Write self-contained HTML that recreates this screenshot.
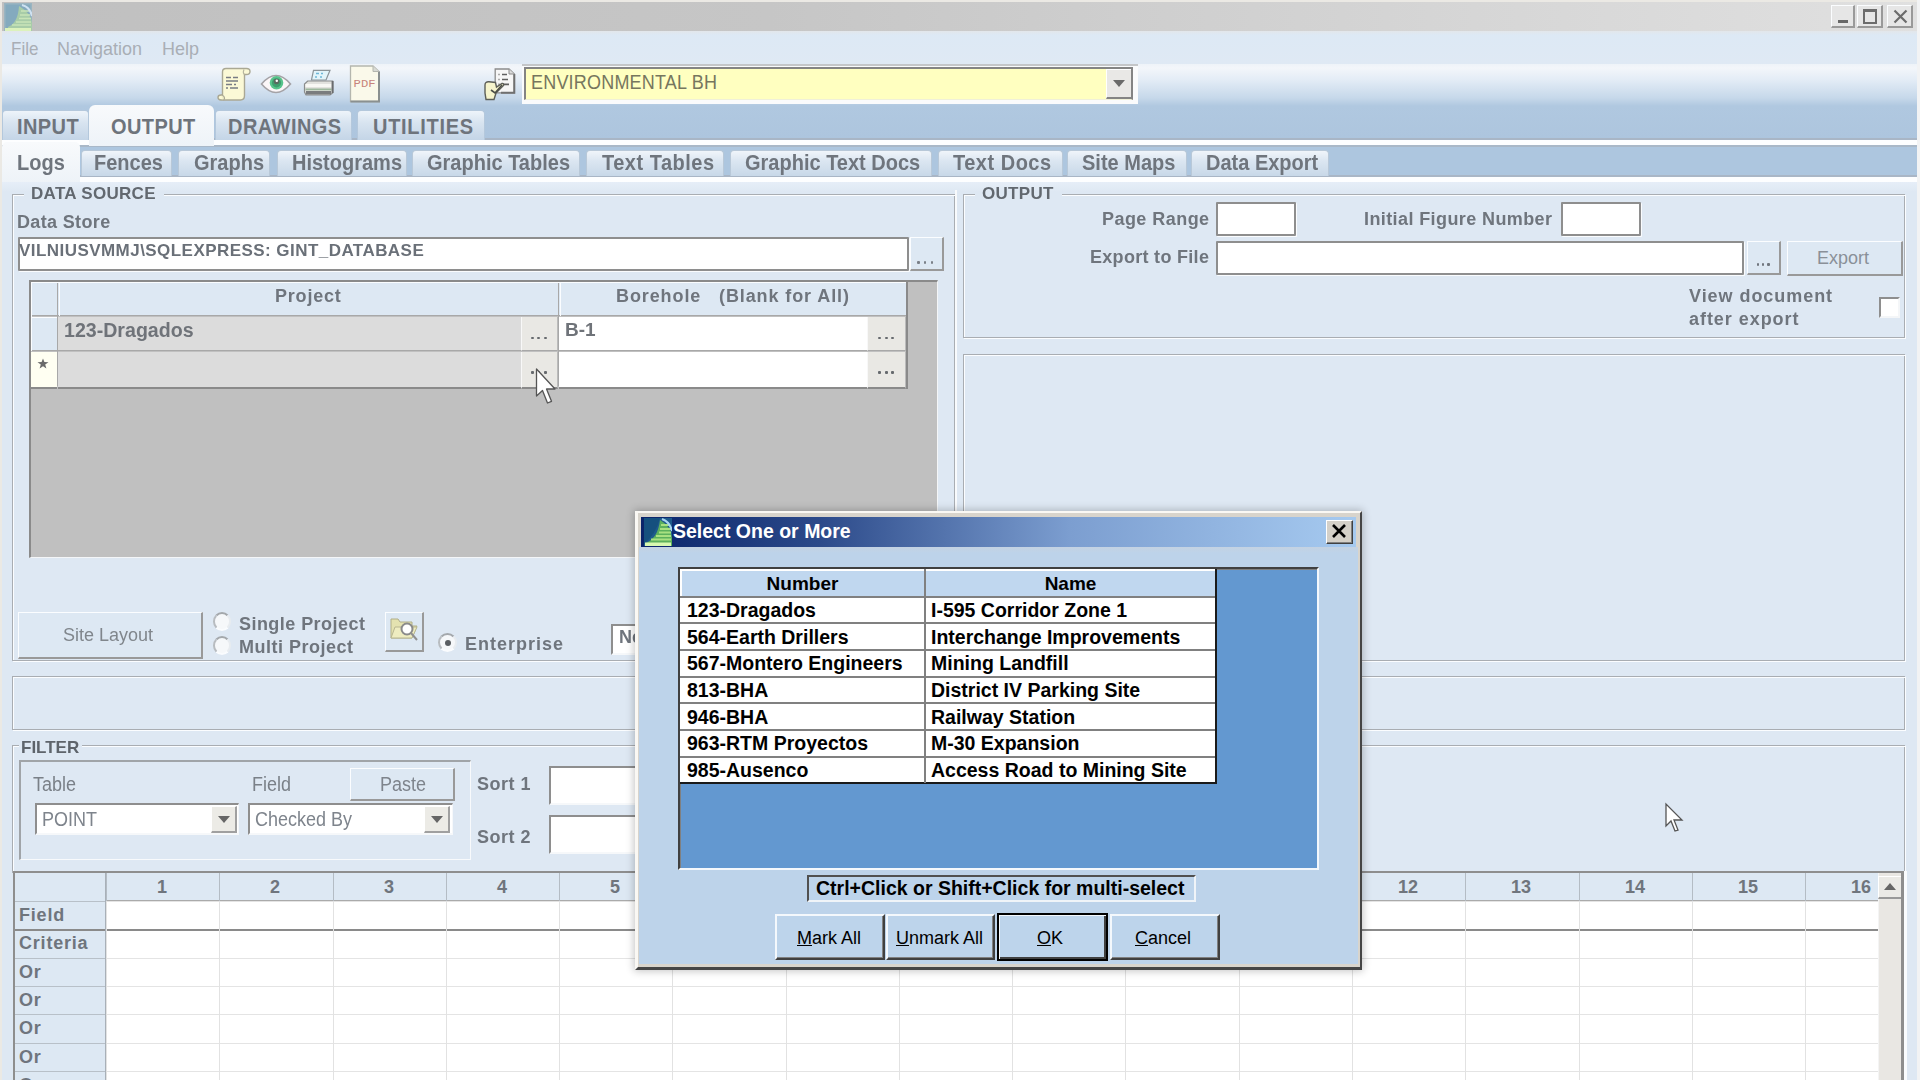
<!DOCTYPE html>
<html><head><meta charset="utf-8">
<style>
*{box-sizing:border-box;margin:0;padding:0}
html,body{width:1920px;height:1080px;overflow:hidden;background:#dee8f3;font-family:"Liberation Sans",sans-serif;color:#6f757d}
.a{position:absolute}
.b{font-weight:bold}
.tb{background:#fff;border:2px solid #8e8e8e;border-radius:1px;box-shadow:1px 1px 0 #fafcfe}
.btn{background:#dde8f3;border-top:1px solid #fbfdff;border-left:1px solid #fbfdff;border-right:2px solid #999;border-bottom:2px solid #999}
.gb{border:1px solid #a8aeb4;box-shadow:1px 1px 0 #fff, inset 1px 1px 0 #fff}
.tab{background:linear-gradient(#eef4fa,#d8e4f0 40%,#c4d5e7);border:1px solid #b4c8dc;border-bottom:none;border-radius:4px 4px 0 0;text-align:center}
.stab{background:linear-gradient(#f0f5fa,#dbe6f1 40%,#c8d8e8);border:1px solid #b8c8d8;border-bottom:none;border-radius:4px 4px 0 0;text-align:center}
.tb2{background:#fff;border-top:2px solid #8e8e8e;border-left:2px solid #8e8e8e;border-right:1px solid #f6f8fa;border-bottom:2px solid #f6f8fa}
.dots{font-size:16px;letter-spacing:1px;color:#666;text-align:center}
#root{position:absolute;left:0;top:0;width:1920px;height:1080px;overflow:hidden;filter:blur(0.3px)}
</style></head><body><div id="root">

<!-- window frame -->
<div class="a" style="left:0;top:0;width:1920px;height:2px;background:#ebe9e4"></div>
<div class="a" style="left:0;top:0;width:2px;height:1080px;background:#ebe9e4"></div>
<div class="a" style="left:2px;top:2px;width:1915px;height:29px;background:linear-gradient(90deg,#c0c0c0,#c6c6c6 40%,#e0e0e0)"></div>
<div class="a" style="left:1917px;top:0;width:3px;height:1080px;background:#f2f3f4"></div>

<!-- app icon -->
<svg class="a" style="left:4px;top:3px" width="28" height="28" viewBox="0 0 28 28">
 <rect x="0" y="0" width="28" height="28" fill="#9ab4c0"/>
 <rect x="1.5" y="1.5" width="25" height="25" fill="#84aabe"/>
 <path d="M15 3 Q27 10 28 20 L28 28 L4 28 L4 24 Q14 20 15 3 Z" fill="#a8cca8"/>
 <path d="M17 8h8M16 12h10M15 15.5h12M12 19h15M8 22h19" stroke="#c8e4b8" stroke-width="1.6"/>
 <path d="M18 2 Q26 4 28 13" fill="none" stroke="#cfe2f2" stroke-width="2"/>
 <rect x="1" y="25" width="26" height="3" fill="#dcf2bc"/>
</svg>
<!-- title buttons -->
<div class="a btn" style="left:1831px;top:5px;width:24px;height:23px;background:#e6e6e6;border-right-color:#9a9a9a;border-bottom-color:#9a9a9a"><div class="a" style="left:6px;top:14px;width:10px;height:3px;background:#686868"></div></div>
<div class="a btn" style="left:1857px;top:5px;width:26px;height:23px;background:#e6e6e6"><div class="a" style="left:5px;top:3px;width:14px;height:15px;border:2px solid #6c6c6c;border-top-width:3px"></div></div>
<div class="a btn" style="left:1887px;top:5px;width:26px;height:23px;background:#e6e6e6"><svg class="a" style="left:4px;top:2px" width="17" height="17" viewBox="0 0 17 17"><path d="M2.5 2.5 L14.5 14.5 M14.5 2.5 L2.5 14.5" stroke="#6c6c6c" stroke-width="2.2"/></svg></div>

<!-- menu bar -->
<div class="a" style="left:2px;top:31px;width:1915px;height:33px;background:linear-gradient(#e3e7eb 0,#dde9f5 4px,#dfe9f4)"></div>
<div class="a" style="left:11px;top:38px;font-size:17px;color:#a9aeb5;transform:scaleY(1.12);transform-origin:0 0">File</div>
<div class="a" style="left:57px;top:38px;font-size:18px;color:#a9aeb5;transform:scaleY(1.06);transform-origin:0 0">Navigation</div>
<div class="a" style="left:162px;top:38px;font-size:18px;color:#a9aeb5;transform:scaleY(1.06);transform-origin:0 0">Help</div>

<!-- toolbar -->
<div class="a" style="left:2px;top:64px;width:1915px;height:76px;background:linear-gradient(#eef3f8 0,#f3f6fa 4px,#e3ecf6 16px,#c6d8ea 34px,#b0c8e0 42px,#adc5de 76px)"></div>
<div class="a" style="left:2px;top:138px;width:1915px;height:2px;background:#a9b6c6"></div><div class="a" style="left:2px;top:140px;width:1915px;height:5px;background:#fdfeff"></div><div class="a" style="left:2px;top:145px;width:1915px;height:2px;background:#a9b8c8"></div>


<!-- toolbar icons -->
<!-- scroll -->
<svg class="a" style="left:216px;top:66px" width="36" height="36" viewBox="0 0 36 36">
 <path d="M6.5 6 Q6.5 2.5 10 2.5 H30.5 Q34 2.5 34 5.5 Q34 8.5 30.5 8.5 H28.5 V29.5 Q28.5 34 24.5 34 H5 Q2 34 2 31.3 Q2 29 5 29 H6.5 Z" fill="#fbf9d6" stroke="#aaa894" stroke-width="1.4"/>
 <path d="M28.5 8.5 Q26.5 7 28 3.5" fill="none" stroke="#b8b6a0" stroke-width="1.2"/>
 <path d="M5 29 Q8.5 29.5 8.5 32.5 Q8.5 34 7 34" fill="#f0eec8" stroke="#aaa894" stroke-width="1.2"/>
 <path d="M10 11.5h5M17 11.5h5M10 15h12M10 18.5h6M18 18.5h2M10 22h2M14 22h8" stroke="#787c84" stroke-width="1.6"/>
</svg>
<!-- eye -->
<svg class="a" style="left:259px;top:71px" width="34" height="25" viewBox="0 0 34 25">
 <defs><clipPath id="eyc"><path d="M2.5 13 Q17 -4 31.5 13 Q17 30 2.5 13 Z"/></clipPath></defs>
 <path d="M2.5 13 Q17 -4 31.5 13 Q17 30 2.5 13 Z" fill="#fbf6f8" stroke="#a4a2a6" stroke-width="1.6"/>
 <g clip-path="url(#eyc)"><circle cx="17.5" cy="11.8" r="6.8" fill="#58c48c"/><circle cx="17.5" cy="11.8" r="4.6" fill="#3e9e6e"/></g>
 <circle cx="17.5" cy="10.5" r="2.8" fill="#5a6a60"/><circle cx="17.8" cy="9.8" r="1.2" fill="#fff"/>
</svg>
<!-- printer -->
<svg class="a" style="left:302px;top:68px" width="34" height="30" viewBox="0 0 34 30">
 <path d="M11.5 2.3 L28 2.3 L24 12 L9.5 12 Z" fill="#e2f4fa" stroke="#8c9498" stroke-width="1.2"/>
 <path d="M14 5.5h3M19 5.5h2M13 9h2M18 9h2" stroke="#70b8d8" stroke-width="1.4"/>
 <path d="M5.7 13 L30.6 13 L30.6 25 L28 27 L4 27 L2.5 24 L2.5 16 Z" fill="#e2e2de" stroke="#8a8c8c" stroke-width="1.2"/>
 <rect x="3.5" y="16" width="26" height="3" fill="#f8f8f4"/>
 <rect x="3.5" y="20.5" width="26" height="1.8" fill="#9cb89c"/>
 <rect x="4" y="23" width="25" height="3.5" fill="#7a7c7e"/>
 <path d="M30.6 13 L30.6 25" stroke="#6a6c6e" stroke-width="2"/>
</svg>
<!-- pdf -->
<svg class="a" style="left:349px;top:65px" width="33" height="38" viewBox="0 0 33 38">
 <path d="M1.5 1 H24 L30 6.5 V36.5 H1.5 Z" fill="#faf9ea" stroke="#b4b6ae" stroke-width="1.3"/>
 <path d="M30 6.5 V36.5 H1.5" fill="none" stroke="#8a9090" stroke-width="2"/>
 <path d="M24 1 V6.5 H30" fill="#d8dad4" stroke="#b4b6ae" stroke-width="1"/>
 <text x="4.6" y="21.5" font-family="Liberation Mono" font-size="11.5" fill="#c8847c" textLength="22" lengthAdjust="spacingAndGlyphs">PDF</text>
</svg>
<!-- hand doc -->
<svg class="a" style="left:482px;top:66px" width="36" height="36" viewBox="0 0 36 36">
 <path d="M13.2 3 H27 L32.3 8 V26.8 H13.2 Z" fill="#f6f6f6" stroke="#8c8c8c" stroke-width="1.3"/>
 <path d="M32.3 8 V26.8 H19" fill="none" stroke="#707070" stroke-width="2"/>
 <path d="M27 3 V8 H32.3" fill="#dcdcdc" stroke="#8c8c8c" stroke-width="1"/>
 <path d="M16.5 8.5h1M20 8.5h5M16.5 13.5h1M20 13.5h6M16.5 18.4h1M20 18.4h7" stroke="#606060" stroke-width="1.6"/>
 <path d="M3 19 Q3 15.5 7 15.8 L13.5 16.5 L14.5 21 L20 17.5 Q22 17 21.5 19.5 L14 27 L12 33.5 L4 33.5 Q2.5 27 3 19 Z" fill="#f6f4cc" stroke="#5c5e58" stroke-width="1.4"/>
 <path d="M9 24 L13 27 L20 19" fill="none" stroke="#4a4c46" stroke-width="1.6"/>
</svg>

<!-- combo -->
<div class="a" style="left:522px;top:64px;width:616px;height:40px;background:linear-gradient(#c4c6c8 0,#c4c6c8 2px,#fafbfc 2px)"></div>
<div class="a" style="left:524px;top:67px;width:609px;height:33px;background:#ffffc0;border-top:2px solid #848484;border-left:2px solid #848484;border-right:2px solid #848484;border-bottom:1px solid #f0f0d8"></div>
<div class="a" style="left:531px;top:70px;font-size:18px;color:#76765e;letter-spacing:0.2px;transform:scaleY(1.17);transform-origin:0 0">ENVIRONMENTAL BH</div>
<div class="a" style="left:1106px;top:69px;width:25px;height:30px;background:#e9e8e6;border-top:1px solid #fff;border-left:1px solid #fff;border-bottom:2px solid #848484"><div class="a" style="left:6px;top:10px;width:0;height:0;border-left:6px solid transparent;border-right:6px solid transparent;border-top:7.5px solid #6a6a6a"></div></div>

<!-- main tabs -->
<div class="a tab" style="left:2px;top:110px;width:87px;height:30px"></div>
<div class="a b" style="left:17px;top:114px;font-size:20px;color:#6e747c;letter-spacing:0.4px;transform:scaleY(1.09);transform-origin:0 0">INPUT</div>
<div class="a" style="left:89px;top:105px;width:125px;height:41px;background:linear-gradient(#f8fafc,#eef3f8);border-radius:6px 6px 0 0"></div>
<div class="a b" style="left:111px;top:114px;font-size:20px;color:#6e747c;letter-spacing:0.4px;transform:scaleY(1.09);transform-origin:0 0">OUTPUT</div>
<div class="a tab" style="left:215px;top:110px;width:137px;height:30px"></div>
<div class="a b" style="left:228px;top:114px;font-size:20px;color:#6e747c;letter-spacing:0.45px;transform:scaleY(1.09);transform-origin:0 0">DRAWINGS</div>
<div class="a tab" style="left:357px;top:110px;width:128px;height:30px"></div>
<div class="a b" style="left:373px;top:114px;font-size:20px;color:#6e747c;letter-spacing:0.7px;transform:scaleY(1.09);transform-origin:0 0">UTILITIES</div>

<!-- sub tab bar -->
<div class="a" style="left:80px;top:147px;width:1837px;height:28px;background:#adc6df"></div>
<div class="a" style="left:2px;top:175px;width:1915px;height:2px;background:#a9b6c6"></div><div class="a" style="left:2px;top:177px;width:1915px;height:5px;background:#fdfeff"></div><div class="a" style="left:2px;top:182px;width:1915px;height:10px;background:linear-gradient(#e6eef8,#dee8f3)"></div>
<div class="a" style="left:2px;top:142px;width:78px;height:40px;background:linear-gradient(#f8fafc,#eef3f8);border-radius:5px 5px 0 0"></div>
<div class="a b" style="left:17px;top:151px;font-size:20px;transform:scaleY(1.08);transform-origin:0 0">Logs</div>
<div class="a stab" style="left:81px;top:150px;width:91px;height:26px"></div>
<div class="a b" style="left:94px;top:151px;font-size:20px;transform:scaleY(1.08);transform-origin:0 0">Fences</div>
<div class="a stab" style="left:178px;top:150px;width:92px;height:26px"></div>
<div class="a b" style="left:194px;top:151px;font-size:20px;transform:scaleY(1.08);transform-origin:0 0">Graphs</div>
<div class="a stab" style="left:277px;top:150px;width:130px;height:26px"></div>
<div class="a b" style="left:292px;top:151px;font-size:20px;transform:scaleY(1.08);transform-origin:0 0">Histograms</div>
<div class="a stab" style="left:412px;top:150px;width:168px;height:26px"></div>
<div class="a b" style="left:427px;top:151px;font-size:20px;transform:scaleY(1.08);transform-origin:0 0">Graphic Tables</div>
<div class="a stab" style="left:586px;top:150px;width:138px;height:26px"></div>
<div class="a b" style="left:602px;top:151px;font-size:20px;letter-spacing:0.5px;transform:scaleY(1.08);transform-origin:0 0">Text Tables</div>
<div class="a stab" style="left:730px;top:150px;width:202px;height:26px"></div>
<div class="a b" style="left:745px;top:151px;font-size:20px;transform:scaleY(1.08);transform-origin:0 0">Graphic Text Docs</div>
<div class="a stab" style="left:938px;top:150px;width:125px;height:26px"></div>
<div class="a b" style="left:953px;top:151px;font-size:20px;letter-spacing:0.5px;transform:scaleY(1.08);transform-origin:0 0">Text Docs</div>
<div class="a stab" style="left:1067px;top:150px;width:120px;height:26px"></div>
<div class="a b" style="left:1082px;top:151px;font-size:20px;transform:scaleY(1.08);transform-origin:0 0">Site Maps</div>
<div class="a stab" style="left:1191px;top:150px;width:138px;height:26px"></div>
<div class="a b" style="left:1206px;top:151px;font-size:20px;transform:scaleY(1.08);transform-origin:0 0">Data Export</div>


<!-- DATA SOURCE group -->
<div class="a" style="left:12px;top:194px;width:943px;height:467px;border:1px solid #a9adb2;border-top:none;box-shadow:inset 1px 0 0 #fbfdff,1px 1px 0 #fbfdff"></div><div class="a" style="left:12px;top:194px;width:12px;height:1px;background:#a9adb2"></div><div class="a" style="left:13px;top:195px;width:11px;height:1px;background:#fbfdff"></div><div class="a" style="left:164px;top:194px;width:791px;height:1px;background:#a9adb2"></div><div class="a" style="left:164px;top:195px;width:791px;height:1px;background:#fbfdff"></div>
<div class="a b" style="left:31px;top:184px;font-size:17px;letter-spacing:0.3px;color:#62686f">DATA SOURCE</div>
<div class="a b" style="left:17px;top:212px;font-size:18px;letter-spacing:0.35px">Data Store</div>
<div class="a tb" style="left:18px;top:237px;width:891px;height:34px"></div>
<div class="a b" style="left:19px;top:241px;font-size:17px;color:#6a7078;letter-spacing:0.45px">VILNIUSVMMJ\SQLEXPRESS: GINT_DATABASE</div>
<div class="a btn" style="left:910px;top:237px;width:34px;height:34px"></div>
<div class="a" style="left:917.2px;top:261.3px;width:2.6px;height:2.6px;border-radius:1px;background:#7a8088"></div><div class="a" style="left:923.9px;top:261.3px;width:2.6px;height:2.6px;border-radius:1px;background:#7a8088"></div><div class="a" style="left:930.5px;top:261.3px;width:2.6px;height:2.6px;border-radius:1px;background:#7a8088"></div>

<!-- project grid -->
<div class="a" style="left:29px;top:280px;width:909px;height:278px;background:#c0c0c0;border-top:2px solid #8a8a8a;border-left:2px solid #8a8a8a;border-bottom:1px solid #f4f6f8;border-right:1px solid #f4f6f8"></div>
<div class="a" style="left:31px;top:282px;width:876px;height:34px;background:#dde8f3;border-bottom:1px solid #a8a8a8"></div>
<div class="a" style="left:57px;top:282px;width:1px;height:104px;background:#a8a8a8"></div>
<div class="a" style="left:558px;top:282px;width:1px;height:104px;background:#a8a8a8"></div>
<div class="a" style="left:906px;top:282px;width:1px;height:104px;background:#a8a8a8"></div>
<div class="a b" style="left:275px;top:286px;font-size:18px;letter-spacing:0.8px">Project</div>
<div class="a b" style="left:616px;top:286px;font-size:18px;letter-spacing:0.9px">Borehole</div><div class="a b" style="left:719px;top:286px;font-size:18px;letter-spacing:0.9px">(Blank for All)</div>
<!-- row 1 -->
<div class="a" style="left:31px;top:317px;width:26px;height:34px;background:#dde8f3;border-bottom:1px solid #a8a8a8"></div>
<div class="a" style="left:58px;top:317px;width:500px;height:34px;background:#dcdcdc;border-bottom:1px solid #a8a8a8"></div>
<div class="a b" style="left:64px;top:319px;font-size:19.6px;color:#6f7379">123-Dragados</div>
<div class="a" style="left:521px;top:317px;width:37px;height:34px;background:#e9e8e4;border-left:1px solid #f8f8f8;border-right:1px solid #bbb;border-bottom:1px solid #a8a8a8"></div>
<div class="a" style="left:530.7px;top:336.5px;width:3px;height:2.6px;border-radius:1px;background:#666a6e"></div><div class="a" style="left:537.3px;top:336.5px;width:3px;height:2.6px;border-radius:1px;background:#666a6e"></div><div class="a" style="left:543.9px;top:336.5px;width:3px;height:2.6px;border-radius:1px;background:#666a6e"></div>
<div class="a" style="left:559px;top:317px;width:347px;height:34px;background:#fff;border-bottom:1px solid #a8a8a8"></div>
<div class="a b" style="left:565px;top:319px;font-size:19px;color:#6f7379">B-1</div>
<div class="a" style="left:867px;top:317px;width:39px;height:34px;background:#e9e8e4;border-left:1px solid #f8f8f8;border-right:1px solid #bbb;border-bottom:1px solid #a8a8a8"></div>
<div class="a" style="left:877.9px;top:336.5px;width:3px;height:2.6px;border-radius:1px;background:#666a6e"></div><div class="a" style="left:884.5px;top:336.5px;width:3px;height:2.6px;border-radius:1px;background:#666a6e"></div><div class="a" style="left:891.1px;top:336.5px;width:3px;height:2.6px;border-radius:1px;background:#666a6e"></div>
<!-- row 2 -->
<div class="a" style="left:31px;top:352px;width:26px;height:37px;background:#fffff2;border-bottom:2px solid #8a8a8a"></div>
<svg class="a" style="left:37px;top:358px" width="12" height="11" viewBox="0 0 12 11"><path d="M6 0.5 L7.4 4 L11.5 4.2 L8.2 6.6 L9.4 10.5 L6 8.2 L2.6 10.5 L3.8 6.6 L0.5 4.2 L4.6 4 Z" fill="#6a6a6a"/></svg>
<div class="a" style="left:58px;top:352px;width:500px;height:37px;background:#dcdcdc;border-bottom:2px solid #8a8a8a"></div>
<div class="a" style="left:521px;top:352px;width:37px;height:37px;background:#e9e8e4;border-left:1px solid #f8f8f8;border-right:1px solid #bbb;border-bottom:2px solid #8a8a8a"></div>
<div class="a" style="left:530.7px;top:371.3px;width:3px;height:2.6px;border-radius:1px;background:#666a6e"></div><div class="a" style="left:537.3px;top:371.3px;width:3px;height:2.6px;border-radius:1px;background:#666a6e"></div><div class="a" style="left:543.9px;top:371.3px;width:3px;height:2.6px;border-radius:1px;background:#666a6e"></div>
<div class="a" style="left:559px;top:352px;width:347px;height:37px;background:#fff;border-bottom:2px solid #8a8a8a"></div>
<div class="a" style="left:867px;top:352px;width:39px;height:37px;background:#e9e8e4;border-left:1px solid #f8f8f8;border-right:1px solid #bbb;border-bottom:2px solid #8a8a8a"></div>
<div class="a" style="left:877.9px;top:371.3px;width:3px;height:2.6px;border-radius:1px;background:#666a6e"></div><div class="a" style="left:884.5px;top:371.3px;width:3px;height:2.6px;border-radius:1px;background:#666a6e"></div><div class="a" style="left:891.1px;top:371.3px;width:3px;height:2.6px;border-radius:1px;background:#666a6e"></div>
<div class="a" style="left:906px;top:282px;width:2px;height:107px;background:#8a8a8a"></div>
<!-- highlights -->
<div class="a" style="left:31px;top:282px;width:875px;height:1px;background:#fbfdff"></div>
<div class="a" style="left:31px;top:282px;width:1px;height:69px;background:#fbfdff"></div>
<div class="a" style="left:59px;top:282px;width:1px;height:34px;background:#fbfdff"></div>
<div class="a" style="left:560px;top:282px;width:1px;height:34px;background:#fbfdff"></div>
<div class="a" style="left:31px;top:317px;width:26px;height:1px;background:#fbfdff"></div>

<!-- Site layout row -->
<div class="a btn" style="left:18px;top:612px;width:185px;height:47px"></div>
<div class="a" style="left:63px;top:625px;font-size:18px;color:#80868c">Site Layout</div>
<div class="a" style="left:213px;top:612px;width:18px;height:19px;border-radius:50%;background:#f6f8fa;border:2px solid;border-color:#a4a8ac #e8ecf0 #fafcfe #b8bcc0"></div>
<div class="a b" style="left:239px;top:614px;font-size:18px;letter-spacing:0.45px">Single Project</div>
<div class="a" style="left:213px;top:636px;width:18px;height:19px;border-radius:50%;background:#f6f8fa;border:2px solid;border-color:#a4a8ac #e8ecf0 #fafcfe #b8bcc0"></div>
<div class="a b" style="left:239px;top:637px;font-size:18px;letter-spacing:0.5px">Multi Project</div>
<div class="a btn" style="left:385px;top:612px;width:39px;height:40px"></div>
<svg class="a" style="left:388px;top:614px" width="34" height="34" viewBox="0 0 34 34">
 <path d="M3 5 L10 5 L12 8 L24 8 L24 12 L29 12 L24 24 L3 24 Z" fill="#e4e2b0" stroke="#b0ae88" stroke-width="1"/>
 <path d="M3 24 L7 13 L29 13 L24 24 Z" fill="#eeecc0" stroke="#b8b690" stroke-width="1"/>
 <circle cx="19" cy="15" r="5.5" fill="#fff" stroke="#8a8a8a" stroke-width="2"/><path d="M23 19 L29 26" stroke="#909090" stroke-width="2"/>
</svg>
<div class="a" style="left:438px;top:633px;width:19px;height:19px;border-radius:50%;background:#f6f8fa;border:2px solid;border-color:#a4a8ac #e8ecf0 #fafcfe #b8bcc0"><div class="a" style="left:5px;top:5px;width:6px;height:6px;border-radius:50%;background:#5a5e62"></div></div>
<div class="a b" style="left:465px;top:634px;font-size:18px;letter-spacing:1px">Enterprise</div>
<div class="a tb2" style="left:611px;top:624px;width:60px;height:31px"></div>
<div class="a b" style="left:619px;top:627px;font-size:18px">Ne</div>

<!-- empty box below datasource -->
<div class="a" style="left:12px;top:676px;width:1893px;height:54px;border:1px solid #a9adb2;border-top:none;box-shadow:inset 1px 0 0 #fbfdff,1px 1px 0 #fbfdff"></div><div class="a" style="left:12px;top:676px;width:1893px;height:1px;background:#a9adb2"></div><div class="a" style="left:13px;top:677px;width:1892px;height:1px;background:#fbfdff"></div>

<!-- OUTPUT group -->
<div class="a" style="left:963px;top:194px;width:942px;height:144px;border:1px solid #a9adb2;border-top:none;box-shadow:inset 1px 0 0 #fbfdff,1px 1px 0 #fbfdff"></div><div class="a" style="left:963px;top:194px;width:12px;height:1px;background:#a9adb2"></div><div class="a" style="left:964px;top:195px;width:11px;height:1px;background:#fbfdff"></div><div class="a" style="left:1062px;top:194px;width:843px;height:1px;background:#a9adb2"></div><div class="a" style="left:1062px;top:195px;width:843px;height:1px;background:#fbfdff"></div>
<div class="a" style="left:955px;top:190px;width:2px;height:480px;background:#f8fafc"></div>
<div class="a b" style="left:982px;top:184px;font-size:17px;letter-spacing:0.3px;color:#62686f">OUTPUT</div>
<div class="a b" style="left:1102px;top:209px;font-size:18px;letter-spacing:0.45px">Page Range</div>
<div class="a tb" style="left:1216px;top:202px;width:80px;height:34px"></div>
<div class="a b" style="left:1364px;top:209px;font-size:18px;letter-spacing:0.4px">Initial Figure Number</div>
<div class="a tb" style="left:1561px;top:202px;width:80px;height:34px"></div>
<div class="a b" style="left:1090px;top:247px;font-size:18px;letter-spacing:0.3px">Export to File</div>
<div class="a tb" style="left:1216px;top:241px;width:528px;height:34px"></div>
<div class="a btn" style="left:1747px;top:241px;width:34px;height:34px"></div>
<div class="a" style="left:1756.7px;top:263.2px;width:2.4px;height:2.4px;border-radius:1px;background:#70767e"></div><div class="a" style="left:1762.0px;top:263.2px;width:2.4px;height:2.4px;border-radius:1px;background:#70767e"></div><div class="a" style="left:1767.3px;top:263.2px;width:2.4px;height:2.4px;border-radius:1px;background:#70767e"></div>
<div class="a btn" style="left:1787px;top:241px;width:116px;height:35px"></div>
<div class="a" style="left:1817px;top:248px;font-size:18px;color:#8a9098">Export</div>
<div class="a b" style="left:1689px;top:285px;font-size:18px;line-height:23px;letter-spacing:0.95px">View document<br>after export</div>
<div class="a" style="left:1879px;top:297px;width:21px;height:21px;background:#fff;border-top:2px solid #8e8e8e;border-left:2px solid #8e8e8e;border-right:2px solid #f4f6f8;border-bottom:2px solid #f4f6f8"></div>

<!-- big empty box right -->
<div class="a" style="left:963px;top:354px;width:942px;height:307px;border:1px solid #a9adb2;border-top:none;box-shadow:inset 1px 0 0 #fbfdff,1px 1px 0 #fbfdff"></div><div class="a" style="left:963px;top:354px;width:942px;height:1px;background:#a9adb2"></div><div class="a" style="left:964px;top:355px;width:941px;height:1px;background:#fbfdff"></div>

<!-- FILTER group -->
<div class="a" style="left:12px;top:745px;width:1893px;height:128px;border:1px solid #a9adb2;border-top:none;box-shadow:inset 1px 0 0 #fbfdff,1px 1px 0 #fbfdff"></div><div class="a" style="left:12px;top:745px;width:7px;height:1px;background:#a9adb2"></div><div class="a" style="left:13px;top:746px;width:6px;height:1px;background:#fbfdff"></div><div class="a" style="left:82px;top:745px;width:1823px;height:1px;background:#a9adb2"></div><div class="a" style="left:82px;top:746px;width:1823px;height:1px;background:#fbfdff"></div>
<div class="a b" style="left:21px;top:738px;font-size:17px;color:#5e646b">FILTER</div>
<div class="a" style="left:19px;top:760px;width:452px;height:100px;border-top:2px solid #a0a4a8;border-left:2px solid #a0a4a8;border-right:1px solid #f8fafc;border-bottom:1px solid #f8fafc"></div>
<div class="a" style="left:33px;top:772px;font-size:18px;color:#7a8088;transform:scaleY(1.17);transform-origin:0 0">Table</div>
<div class="a" style="left:252px;top:772px;font-size:18px;color:#7a8088;transform:scaleY(1.17);transform-origin:0 0">Field</div>
<div class="a btn" style="left:350px;top:768px;width:105px;height:33px"></div>
<div class="a" style="left:380px;top:772px;font-size:18px;color:#7e848c;transform:scaleY(1.17);transform-origin:0 0">Paste</div>
<div class="a tb2" style="left:35px;top:803px;width:204px;height:32px"></div>
<div class="a" style="left:42px;top:807px;font-size:18px;color:#7e848c;transform:scaleY(1.17);transform-origin:0 0">POINT</div>
<div class="a" style="left:211px;top:806px;width:26px;height:27px;background:#ecebe6;border-top:1px solid #fff;border-left:1px solid #fff;border-right:2px solid #a0a0a0;border-bottom:2px solid #a0a0a0"><div class="a" style="left:6px;top:9px;width:0;height:0;border-left:6px solid transparent;border-right:6px solid transparent;border-top:7px solid #666"></div></div>
<div class="a tb2" style="left:248px;top:803px;width:205px;height:32px"></div>
<div class="a" style="left:255px;top:807px;font-size:18px;color:#7e848c;transform:scaleY(1.17);transform-origin:0 0">Checked By</div>
<div class="a" style="left:424px;top:806px;width:26px;height:27px;background:#ecebe6;border-top:1px solid #fff;border-left:1px solid #fff;border-right:2px solid #a0a0a0;border-bottom:2px solid #a0a0a0"><div class="a" style="left:6px;top:9px;width:0;height:0;border-left:6px solid transparent;border-right:6px solid transparent;border-top:7px solid #666"></div></div>
<div class="a b" style="left:477px;top:774px;font-size:18px;letter-spacing:0.5px">Sort 1</div>
<div class="a b" style="left:477px;top:827px;font-size:18px;letter-spacing:0.5px">Sort 2</div>
<div class="a tb2" style="left:549px;top:766px;width:100px;height:39px"></div>
<div class="a tb2" style="left:549px;top:815px;width:100px;height:39px"></div>


<!-- criteria grid -->
<div class="a" style="left:13px;top:871px;width:1891px;height:209px;background:#fff;border-top:2px solid #8e8e8e;border-left:2px solid #8e8e8e"></div>
<div class="a" style="left:15px;top:873px;width:1863px;height:28px;background:#dde8f3;border-bottom:1px solid #aaa"></div>
<div class="a" style="left:15px;top:873px;width:91px;height:207px;background:#dde8f3"></div>
<div class="a" style="left:15px;top:901px;width:91px;height:1px;background:#b8c0c8"></div>
<div class="a" style="left:106px;top:901px;width:1772px;height:1px;background:#e4e4e4"></div>
<div class="a" style="left:15px;top:929px;width:1863px;height:2px;background:#8a8a8a"></div>
<div class="a" style="left:15px;top:958px;width:91px;height:1px;background:#b8c0c8"></div>
<div class="a" style="left:106px;top:958px;width:1772px;height:1px;background:#e4e4e4"></div>
<div class="a" style="left:15px;top:986px;width:91px;height:1px;background:#b8c0c8"></div>
<div class="a" style="left:106px;top:986px;width:1772px;height:1px;background:#e4e4e4"></div>
<div class="a" style="left:15px;top:1014px;width:91px;height:1px;background:#b8c0c8"></div>
<div class="a" style="left:106px;top:1014px;width:1772px;height:1px;background:#e4e4e4"></div>
<div class="a" style="left:15px;top:1043px;width:91px;height:1px;background:#b8c0c8"></div>
<div class="a" style="left:106px;top:1043px;width:1772px;height:1px;background:#e4e4e4"></div>
<div class="a" style="left:15px;top:1071px;width:91px;height:1px;background:#b8c0c8"></div>
<div class="a" style="left:106px;top:1071px;width:1772px;height:1px;background:#e4e4e4"></div>
<div class="a" style="left:106px;top:873px;width:1px;height:28px;background:#b4bcc4"></div>
<div class="a" style="left:106px;top:901px;width:1px;height:179px;background:#e2e2e2"></div>
<div class="a b" style="left:122px;top:877px;width:80px;text-align:center;font-size:18px">1</div>
<div class="a" style="left:219px;top:873px;width:1px;height:28px;background:#b4bcc4"></div>
<div class="a" style="left:219px;top:901px;width:1px;height:179px;background:#e2e2e2"></div>
<div class="a b" style="left:235px;top:877px;width:80px;text-align:center;font-size:18px">2</div>
<div class="a" style="left:333px;top:873px;width:1px;height:28px;background:#b4bcc4"></div>
<div class="a" style="left:333px;top:901px;width:1px;height:179px;background:#e2e2e2"></div>
<div class="a b" style="left:349px;top:877px;width:80px;text-align:center;font-size:18px">3</div>
<div class="a" style="left:446px;top:873px;width:1px;height:28px;background:#b4bcc4"></div>
<div class="a" style="left:446px;top:901px;width:1px;height:179px;background:#e2e2e2"></div>
<div class="a b" style="left:462px;top:877px;width:80px;text-align:center;font-size:18px">4</div>
<div class="a" style="left:559px;top:873px;width:1px;height:28px;background:#b4bcc4"></div>
<div class="a" style="left:559px;top:901px;width:1px;height:179px;background:#e2e2e2"></div>
<div class="a b" style="left:575px;top:877px;width:80px;text-align:center;font-size:18px">5</div>
<div class="a" style="left:672px;top:873px;width:1px;height:28px;background:#b4bcc4"></div>
<div class="a" style="left:672px;top:901px;width:1px;height:179px;background:#e2e2e2"></div>
<div class="a b" style="left:688px;top:877px;width:80px;text-align:center;font-size:18px">6</div>
<div class="a" style="left:786px;top:873px;width:1px;height:28px;background:#b4bcc4"></div>
<div class="a" style="left:786px;top:901px;width:1px;height:179px;background:#e2e2e2"></div>
<div class="a b" style="left:802px;top:877px;width:80px;text-align:center;font-size:18px">7</div>
<div class="a" style="left:899px;top:873px;width:1px;height:28px;background:#b4bcc4"></div>
<div class="a" style="left:899px;top:901px;width:1px;height:179px;background:#e2e2e2"></div>
<div class="a b" style="left:915px;top:877px;width:80px;text-align:center;font-size:18px">8</div>
<div class="a" style="left:1012px;top:873px;width:1px;height:28px;background:#b4bcc4"></div>
<div class="a" style="left:1012px;top:901px;width:1px;height:179px;background:#e2e2e2"></div>
<div class="a b" style="left:1028px;top:877px;width:80px;text-align:center;font-size:18px">9</div>
<div class="a" style="left:1125px;top:873px;width:1px;height:28px;background:#b4bcc4"></div>
<div class="a" style="left:1125px;top:901px;width:1px;height:179px;background:#e2e2e2"></div>
<div class="a b" style="left:1141px;top:877px;width:80px;text-align:center;font-size:18px">10</div>
<div class="a" style="left:1239px;top:873px;width:1px;height:28px;background:#b4bcc4"></div>
<div class="a" style="left:1239px;top:901px;width:1px;height:179px;background:#e2e2e2"></div>
<div class="a b" style="left:1255px;top:877px;width:80px;text-align:center;font-size:18px">11</div>
<div class="a" style="left:1352px;top:873px;width:1px;height:28px;background:#b4bcc4"></div>
<div class="a" style="left:1352px;top:901px;width:1px;height:179px;background:#e2e2e2"></div>
<div class="a b" style="left:1368px;top:877px;width:80px;text-align:center;font-size:18px">12</div>
<div class="a" style="left:1465px;top:873px;width:1px;height:28px;background:#b4bcc4"></div>
<div class="a" style="left:1465px;top:901px;width:1px;height:179px;background:#e2e2e2"></div>
<div class="a b" style="left:1481px;top:877px;width:80px;text-align:center;font-size:18px">13</div>
<div class="a" style="left:1579px;top:873px;width:1px;height:28px;background:#b4bcc4"></div>
<div class="a" style="left:1579px;top:901px;width:1px;height:179px;background:#e2e2e2"></div>
<div class="a b" style="left:1595px;top:877px;width:80px;text-align:center;font-size:18px">14</div>
<div class="a" style="left:1692px;top:873px;width:1px;height:28px;background:#b4bcc4"></div>
<div class="a" style="left:1692px;top:901px;width:1px;height:179px;background:#e2e2e2"></div>
<div class="a b" style="left:1708px;top:877px;width:80px;text-align:center;font-size:18px">15</div>
<div class="a" style="left:1805px;top:873px;width:1px;height:28px;background:#b4bcc4"></div>
<div class="a" style="left:1805px;top:901px;width:1px;height:179px;background:#e2e2e2"></div>
<div class="a b" style="left:1821px;top:877px;width:80px;text-align:center;font-size:18px">16</div>
<div class="a" style="left:105px;top:873px;width:1px;height:207px;background:#a8b0b8"></div>
<div class="a b" style="left:19px;top:905px;font-size:18px;letter-spacing:0.8px">Field</div>
<div class="a b" style="left:19px;top:933px;font-size:18px;letter-spacing:0.8px">Criteria</div>
<div class="a b" style="left:19px;top:962px;font-size:18px;letter-spacing:0.8px">Or</div>
<div class="a b" style="left:19px;top:990px;font-size:18px;letter-spacing:0.8px">Or</div>
<div class="a b" style="left:19px;top:1018px;font-size:18px;letter-spacing:0.8px">Or</div>
<div class="a b" style="left:19px;top:1047px;font-size:18px;letter-spacing:0.8px">Or</div>
<div class="a b" style="left:19px;top:1075px;font-size:18px;letter-spacing:0.8px">Or</div>

<div class="a" style="left:1878px;top:873px;width:24px;height:207px;background:#e9e7e3;border-left:1px solid #f4f4f4"></div>
<div class="a" style="left:1878px;top:876px;width:24px;height:23px;background:#ebeae6;border-top:1px solid #fff;border-left:1px solid #fff;border-right:1px solid #999;border-bottom:2px solid #999"><div class="a" style="left:5px;top:6px;width:0;height:0;border-left:6px solid transparent;border-right:6px solid transparent;border-bottom:7px solid #666"></div></div>
<div class="a" style="left:1901px;top:871px;width:3px;height:209px;background:#8e8e8e"></div><div class="a" style="left:1904px;top:871px;width:3px;height:209px;background:#fafcfe"></div>


<!-- DIALOG -->
<div class="a" style="left:635px;top:511px;width:727px;height:459px;background:#d8d4cc;border-top:2px solid #faf8f4;border-left:3px solid #faf8f4;border-right:2px solid #454545;border-bottom:3px solid #454545;box-shadow:0 0 8px 1px rgba(0,0,0,0.24)"></div>
<div class="a" style="left:639px;top:547px;width:719px;height:417px;background:linear-gradient(#c4d2e2,#bdd3ea 6px)"></div>
<div class="a" style="left:641px;top:517px;width:715px;height:30px;background:linear-gradient(90deg,#0a246a 0%,#2c4a8a 25%,#7c9ed0 60%,#a6caf0 100%)"></div>
<svg class="a" style="left:644px;top:518px" width="28" height="28" viewBox="0 0 28 28">
 <rect x="0" y="0" width="28" height="28" fill="#1e5a8c"/>
 <path d="M0 0 H16 Q12 16 0 26 Z" fill="#15507e"/>
 <path d="M16 2 Q27 8 28 20 L28 28 L2 28 L2 25 Q14 20 16 2 Z" fill="#5cb05c"/>
 <path d="M17 7h9M16 11h11M15 14.5h12M12 18h15M7 21.5h20" stroke="#a8e080" stroke-width="1.8"/>
 <path d="M18 1 Q26 4 28 13" fill="none" stroke="#a8d4f0" stroke-width="2"/>
 <rect x="1" y="24.5" width="26" height="3.5" fill="#d8f8b0"/>
</svg>
<div class="a b" style="left:673px;top:520px;font-size:19.5px;color:#fff">Select One or More</div>
<div class="a" style="left:1326px;top:520px;width:27px;height:24px;background:#d4d0c8;border-top:1px solid #fff;border-left:1px solid #fff;border-right:1px solid #404040;border-bottom:1px solid #404040;box-shadow:inset -1px -1px 0 #808080"></div>
<svg class="a" style="left:1330px;top:523px" width="18" height="17" viewBox="0 0 18 17"><path d="M3 2 L15 14 M15 2 L3 14" stroke="#000" stroke-width="2.6"/></svg>

<!-- list area -->
<div class="a" style="left:678px;top:567px;width:641px;height:303px;background:#6398d0;border-top:2px solid #404040;border-left:2px solid #404040;border-right:2px solid #f4f8fc;border-bottom:2px solid #f4f8fc;box-shadow:inset 1px 1px 0 #808080"></div>
<div class="a" style="left:680px;top:569px;width:537px;height:215px;background:#fff;border-right:2px solid #1a1a1a;border-bottom:2px solid #1a1a1a"></div>
<div class="a" style="left:680px;top:569px;width:535px;height:27px;background:#c0d7ef;border-top:2px solid #fff;border-left:2px solid #fff"></div>
<div class="a" style="left:924px;top:569px;width:2px;height:214px;background:#808080"></div>
<div class="a b" style="left:680px;top:573px;width:245px;text-align:center;font-size:19px;color:#000">Number</div>
<div class="a b" style="left:926px;top:573px;width:289px;text-align:center;font-size:19px;color:#000">Name</div>
<div class="a" style="left:680px;top:595.5px;width:535px;height:2px;background:#808080"></div>
<div class="a b" style="left:687px;top:599.0px;font-size:19.5px;color:#000">123-Dragados</div>
<div class="a b" style="left:931px;top:599.0px;font-size:19.5px;color:#000">I-595 Corridor Zone 1</div>
<div class="a" style="left:680px;top:622.2px;width:535px;height:2px;background:#808080"></div>
<div class="a b" style="left:687px;top:625.7px;font-size:19.5px;color:#000">564-Earth Drillers</div>
<div class="a b" style="left:931px;top:625.7px;font-size:19.5px;color:#000">Interchange Improvements</div>
<div class="a" style="left:680px;top:648.8px;width:535px;height:2px;background:#808080"></div>
<div class="a b" style="left:687px;top:652.3px;font-size:19.5px;color:#000">567-Montero Engineers</div>
<div class="a b" style="left:931px;top:652.3px;font-size:19.5px;color:#000">Mining Landfill</div>
<div class="a" style="left:680px;top:675.5px;width:535px;height:2px;background:#808080"></div>
<div class="a b" style="left:687px;top:679.0px;font-size:19.5px;color:#000">813-BHA</div>
<div class="a b" style="left:931px;top:679.0px;font-size:19.5px;color:#000">District IV Parking Site</div>
<div class="a" style="left:680px;top:702.2px;width:535px;height:2px;background:#808080"></div>
<div class="a b" style="left:687px;top:705.7px;font-size:19.5px;color:#000">946-BHA</div>
<div class="a b" style="left:931px;top:705.7px;font-size:19.5px;color:#000">Railway Station</div>
<div class="a" style="left:680px;top:728.9px;width:535px;height:2px;background:#808080"></div>
<div class="a b" style="left:687px;top:732.4px;font-size:19.5px;color:#000">963-RTM Proyectos</div>
<div class="a b" style="left:931px;top:732.4px;font-size:19.5px;color:#000">M-30 Expansion</div>
<div class="a" style="left:680px;top:755.5px;width:535px;height:2px;background:#808080"></div>
<div class="a b" style="left:687px;top:759.0px;font-size:19.5px;color:#000">985-Ausenco</div>
<div class="a b" style="left:931px;top:759.0px;font-size:19.5px;color:#000">Access Road to Mining Site</div>

<!-- hint -->
<div class="a" style="left:807px;top:875px;width:389px;height:27px;background:#bdd4eb;border-top:2px solid #505050;border-left:2px solid #505050;border-right:2px solid #f0f4f8;border-bottom:2px solid #f0f4f8"></div>
<div class="a b" style="left:816px;top:877px;font-size:19.5px;color:#000">Ctrl+Click or Shift+Click for multi-select</div>
<!-- buttons -->
<div class="a" style="left:775px;top:914px;width:110px;height:46px;background:#bdd4eb;border-top:2px solid #f4f8fc;border-left:2px solid #f4f8fc;border-right:2px solid #404040;border-bottom:2px solid #404040;box-shadow:inset -1px -1px 0 #808080"></div>
<div class="a" style="left:797px;top:928px;font-size:18px;color:#000"><u>M</u>ark All</div>
<div class="a" style="left:886px;top:914px;width:109px;height:46px;background:#bdd4eb;border-top:2px solid #f4f8fc;border-left:2px solid #f4f8fc;border-right:2px solid #404040;border-bottom:2px solid #404040;box-shadow:inset -1px -1px 0 #808080"></div>
<div class="a" style="left:896px;top:928px;font-size:18px;color:#000"><u>U</u>nmark All</div>
<div class="a" style="left:997px;top:913px;width:111px;height:48px;background:#bdd4eb;border:2px solid #000;box-shadow:inset 1px 1px 0 #f4f8fc, inset -2px -2px 0 #404040"></div>
<div class="a" style="left:1037px;top:928px;font-size:18px;color:#000"><u>O</u>K</div>
<div class="a" style="left:1110px;top:914px;width:110px;height:46px;background:#bdd4eb;border-top:2px solid #f4f8fc;border-left:2px solid #f4f8fc;border-right:2px solid #404040;border-bottom:2px solid #404040;box-shadow:inset -1px -1px 0 #808080"></div>
<div class="a" style="left:1135px;top:928px;font-size:18px;color:#000"><u>C</u>ancel</div>

<!-- cursors -->
<svg class="a" style="left:535px;top:367px" width="24" height="40" viewBox="0 0 24 40"><path d="M1.5 2 L1.5 29 L7.5 23.5 L12.5 36 L16.5 34.3 L11.5 22 L20 22 Z" fill="#fff" stroke="#555" stroke-width="1.3" stroke-linejoin="round"/></svg>
<svg class="a" style="left:1664px;top:802px" width="22" height="32" viewBox="0 0 22 32"><path d="M2 2 L2 24 L7 19 L11 29 L14 28 L10 18 L18 18 Z" fill="#fff" stroke="#555" stroke-width="1.3"/></svg>

</div></body></html>
